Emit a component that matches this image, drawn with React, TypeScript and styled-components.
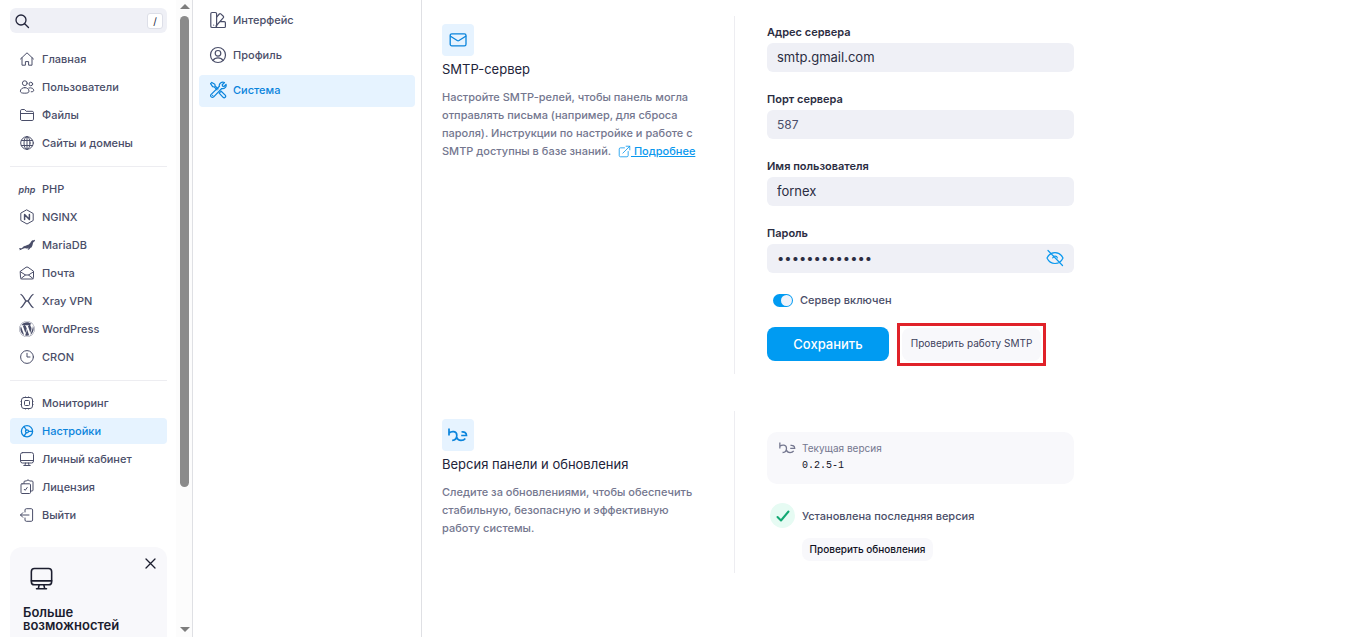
import React from 'react';
import styled, { createGlobalStyle, css } from 'styled-components';
import { FaWordpress } from 'react-icons/fa';
import { SiMariadb } from 'react-icons/si';

const GlobalStyle = createGlobalStyle`
  *, *::before, *::after { box-sizing: border-box; }
  body {
    margin: 0;
    background: #fff;
    color: #4a4e69;
    font-family: Inter, 'Liberation Sans', sans-serif;
    font-size: 11px;
    font-weight: 500;
  }
  button, input { font: inherit; color: inherit; }
  h2, p { margin: 0; }
`;

const Page = styled.div`
  display: flex;
  height: 100vh;
  overflow: hidden;
`;

const Sidebar = styled.aside`
  display: flex;
  flex: none;
  width: 193px;
  border-right: 1px solid #dfe0e4;
`;

const SidebarContent = styled.div`
  flex: 1;
  min-width: 0;
  overflow: hidden;
  padding: 8px 9px 0 10px;
`;

const ScrollTrack = styled.div`
  display: flex;
  flex: none;
  flex-direction: column;
  align-items: center;
  justify-content: space-between;
  width: 16px;
  padding: 4px 3px 5px 4px;
  background: #fcfcfc;
`;

const ScrollArrow = styled.span<{ $down?: boolean }>`
  border: 5px solid transparent;
  border-top-width: ${(p) => (p.$down ? '5px' : '0')};
  border-bottom-width: ${(p) => (p.$down ? '0' : '5px')};
  border-top-color: ${(p) => (p.$down ? '#7d7d7d' : 'transparent')};
  border-bottom-color: ${(p) => (p.$down ? 'transparent' : '#7d7d7d')};
`;

const ScrollRail = styled.div`
  flex: 1;
  width: 9px;
  margin: 7px 0;
`;

const ScrollThumb = styled.div`
  height: 78%;
  border-radius: 5px;
  background: #8b8b8b;
`;

const SearchBox = styled.label`
  display: flex;
  align-items: center;
  height: 25px;
  margin-bottom: 13px;
  padding: 0 4px;
  border-radius: 6px;
  background: #eff0f6;
  color: #22243a;
`;

const SearchInput = styled.input`
  flex: 1;
  min-width: 0;
  border: 0;
  outline: 0;
  background: none;
`;

const Key = styled.kbd`
  width: 16px;
  height: 16px;
  border: 1px solid #dddfe8;
  border-radius: 3px;
  background: #fff;
  font-family: inherit;
  font-size: 10px;
  font-weight: 400;
  line-height: 14px;
  text-align: center;
`;

const NavGroup = styled.nav`
  display: flex;
  flex-direction: column;
  gap: 2px;
  & + & {
    margin-top: 10px;
    padding-top: 9px;
    border-top: 1px solid #ededf1;
  }
`;

const activeLink = css`
  background: #e6f3ff;
  color: #0a84dc;
`;

const NavLink = styled.a<{ $active?: boolean }>`
  display: flex;
  align-items: center;
  gap: 6px;
  height: 26px;
  padding: 0 8px;
  border-radius: 4px;
  color: #4a4e69;
  text-decoration: none;
  white-space: nowrap;
  svg { margin: 0 1px; }
  ${(p) => p.$active && activeLink}
`;

const PhpMark = styled.span`
  width: 18px;
  font-size: 9px;
  font-style: italic;
  font-weight: 600;
  text-align: center;
`;

const Promo = styled.section`
  display: flex;
  flex-direction: column;
  height: 140px;
  margin-top: 19px;
  padding: 9px 9px 0 13px;
  border-radius: 12px;
  background: #f8f8fb;
  color: #1b1d2e;
`;

const CloseButton = styled.button`
  display: flex;
  align-self: flex-end;
  padding: 2px;
  border: 0;
  background: none;
`;

const PromoIcon = styled.div`
  margin-top: -5px;
  padding: 0 6px;
  line-height: 0;
`;

const PromoTitle = styled.h2`
  margin-top: 15px;
  font-size: 13px;
  font-weight: 600;
  line-height: 13px;
`;

const Subnav = styled.nav`
  display: flex;
  flex: none;
  flex-direction: column;
  gap: 3px;
  width: 229px;
  padding: 5px 6px;
  border-right: 1px solid #dfe0e4;
`;

const SubnavLink = styled(NavLink)`
  height: 32px;
  padding: 0 9px 2px;
  gap: 5px;
`;

const Main = styled.main`
  display: flex;
  flex: 1;
  flex-direction: column;
  gap: 37px;
  min-width: 0;
  overflow: hidden;
  padding: 16px 20px;
`;

const Section = styled.section<{ $minHeight: number }>`
  display: grid;
  flex: none;
  grid-template-columns: 293px minmax(0, 307px);
  column-gap: 32px;
  min-height: ${(p) => p.$minHeight}px;
`;

const Intro = styled.div`
  padding: 8px 34px 0 0;
  border-right: 1px solid #ededf1;
`;

const IconTile = styled.div`
  display: flex;
  align-items: center;
  justify-content: center;
  width: 32px;
  height: 32px;
  border-radius: 4px;
  background: #e6f3ff;
  color: #0a84dc;
`;

const Title = styled.h2`
  margin: 4px 0 10px;
  color: #22243a;
  font-size: 13px;
  font-weight: 400;
  line-height: 18px;
`;

const Description = styled.p`
  color: #74778f;
  line-height: 18px;
`;

const DocLink = styled.a`
  margin-left: 4px;
  color: #0a98ee;
  white-space: nowrap;
  svg { vertical-align: -3px; }
`;

const Form = styled.form`
  display: flex;
  flex-direction: column;
  padding-top: 9px;
`;

const Field = styled.div`
  display: flex;
  flex-direction: column;
  gap: 4px;
  margin-bottom: 20px;
`;

const FieldLabel = styled.label`
  color: #2b2d42;
  font-weight: 600;
  line-height: 14px;
`;

const InputBox = styled.div`
  display: flex;
  align-items: center;
  height: 29px;
  padding: 0 10px 1px;
  border-radius: 6px;
  background: #eff0f6;
`;

const TextInput = styled.input<{ $small?: boolean }>`
  flex: 1;
  min-width: 0;
  padding: 0;
  border: 0;
  outline: 0;
  background: none;
  color: ${(p) => (p.$small ? '#4a4e69' : '#2b2d42')};
  font-size: ${(p) => (p.$small ? '12px' : '13px')};
  font-weight: 400;
`;

const IconButton = styled.button`
  display: flex;
  padding: 0;
  border: 0;
  background: none;
  color: #0a98ee;
`;

const ToggleLabel = styled.label`
  display: flex;
  align-items: center;
  gap: 7px;
  height: 14px;
  margin: 0 0 20px 6px;
`;

const Toggle = styled.input`
  appearance: none;
  display: flex;
  justify-content: flex-end;
  width: 20px;
  height: 13px;
  margin: 0;
  padding: 1px;
  border-radius: 7px;
  background: #009bf2;
  &::before {
    content: '';
    width: 11px;
    height: 11px;
    border-radius: 50%;
    background: #eef3fb;
  }
`;

const Actions = styled.div`
  display: flex;
  align-items: center;
  gap: 8px;
  height: 34px;
`;

const SaveButton = styled.button`
  width: 122px;
  height: 34px;
  border: 0;
  border-radius: 8px;
  background: #009bf2;
  color: #fff;
  font-size: 13px;
`;

const Highlight = styled.div`
  flex: none;
  padding: 2px;
  border: 3px solid #e02229;
`;

const SoftButton = styled.button<{ $strong?: boolean }>`
  width: ${(p) => (p.$strong ? 131 : 139)}px;
  height: ${(p) => (p.$strong ? 23 : 33)}px;
  padding: 0 0 2px;
  border: 0;
  border-radius: 8px;
  background: #f8f8fb;
  color: ${(p) => (p.$strong ? '#10121f' : '#3d415c')};
  font-size: 10px;
  font-weight: ${(p) => (p.$strong ? 500 : 400)};
  white-space: nowrap;
`;

const Updates = styled.div`
  display: flex;
  flex-direction: column;
  padding-top: 21px;
`;

const VersionCard = styled.div`
  display: flex;
  gap: 6px;
  height: 52px;
  padding: 9px 12px;
  border-radius: 10px;
  background: #f8f8fb;
  color: #74778f;
  font-size: 10px;
  font-weight: 400;
  line-height: 14px;
`;

const Version = styled.div`
  color: #12131f;
  font-family: 'Liberation Mono', monospace;
  line-height: 22px;
`;

const Status = styled.div`
  display: flex;
  align-items: center;
  gap: 7px;
  margin: 19px 0 10px 3px;
`;

const CheckCircle = styled.span`
  display: flex;
  align-items: center;
  justify-content: center;
  width: 25px;
  height: 25px;
  border-radius: 50%;
  background: #e6fbf3;
  color: #12a873;
`;

const UpdateAction = styled.div`
  padding-left: 35px;
`;

const StrokeSvg = styled.svg`
  flex: none;
  fill: none;
  stroke: currentColor;
  stroke-linecap: round;
  stroke-linejoin: round;
`;

type IconProps = { size?: number; weight?: number; box?: number; children?: React.ReactNode };

const Icon = ({ size = 16, weight = 1, box = 16, children }: IconProps) => (
  <StrokeSvg width={size} height={size} viewBox={`0 0 ${box} ${box}`} strokeWidth={weight} aria-hidden="true">
    {children}
  </StrokeSvg>
);

const HomeIcon = () => (
  <Icon>
    <path d="M1.5 8 8 1.8 14.5 8M3 6.8v7.4h3.4v-3.6h3.2v3.6H13V6.8" />
  </Icon>
);
const UsersIcon = () => (
  <Icon>
    <circle cx="5.8" cy="4.2" r="2.4" />
    <circle cx="11.8" cy="5" r="1.8" />
    <path d="M5.8 8.6c-2.6 0-4.4 1.6-4.4 3.6 0 1.4 1.2 2 4.4 2s4.2-.6 4.2-2c0-2-1.7-3.6-4.2-3.6ZM9.8 9c2.8-.8 4.9.6 4.9 2.4 0 1-.7 1.4-2.5 1.4" />
  </Icon>
);
const FolderIcon = () => (
  <Icon>
    <path d="M1.5 12.2V3.8c0-.8.5-1.3 1.3-1.3h2.7l1.7 1.8h6c.8 0 1.3.5 1.3 1.3v6.6c0 .8-.5 1.3-1.3 1.3H2.8c-.8 0-1.3-.5-1.3-1.3ZM1.5 6.5h13" />
  </Icon>
);
const GlobeIcon = () => (
  <Icon>
    <circle cx="8" cy="8" r="6.3" />
    <ellipse cx="8" cy="8" rx="3" ry="6.3" />
    <path d="M2.5 5.5h11M2.5 10.5h11M8 1.7v12.6" />
  </Icon>
);
const NginxIcon = () => (
  <Icon>
    <path d="m8 1 6.2 3.5v7L8 15l-6.2-3.5v-7Z" />
    <path d="M5.6 10.5v-5l4.800 5v-5" strokeWidth="1.5" />
  </Icon>
);
const MailOpenIcon = () => (
  <Icon>
    <path d="M1.5 6.2 7 2.3c.6-.4 1.4-.4 2 0l5.500 3.900v6.500c0 .8-.5 1.300-1.300 1.300H2.800c-.8 0-1.300-.5-1.300-1.300ZM1.500 6.800l5 3.200h3l5-3.200M2 13.500 6.500 10M14 13.500 9.500 10" />
  </Icon>
);
const XrayIcon = () => (
  <Icon weight={1.3}>
    <path d="M2 1.5c2 1 3 4 5 6.5-2 2.5-3 5.5-5 6.500M14 1.500c-2 1-3 4-5 6.500 2 2.500 3 5.500 5 6.500M7 8h2" />
  </Icon>
);
const ClockIcon = () => (
  <Icon>
    <circle cx="8" cy="8" r="6.4" />
    <path d="M8 4.3V8h3" />
  </Icon>
);
const ChipIcon = () => (
  <Icon>
    <rect x="2.5" y="2.5" width="11" height="11" rx="2.5" />
    <rect x="5.5" y="5.5" width="5" height="5" rx="1" />
    <path strokeWidth="0.5" d="M6.500 1.500v1M9.500 1.500v1M6.500 13.500v1M9.500 13.500v1M1.500 6.500h1M1.500 9.500h1M13.500 6.500h1M13.500 9.500h1" />
  </Icon>
);
const SettingsIcon = () => (
  <Icon weight={1.3}>
    <circle cx="8" cy="8.3" r="5.6" />
    <circle cx="8" cy="8.3" r="1.5" />
    <path d="M9.5 8.3h4M7.3 7 5 3.5M7.3 9.600 5 13.100" />
  </Icon>
);
const MonitorIcon = ({ size = 16 }: { size?: number }) => (
  <Icon size={size}>
    <rect x="1.5" y="1.6" width="13" height="10.4" rx="2" />
    <path d="M1.500 9.500h13M6.500 12 6 14.300M9.500 12l.5 2.300M4.800 14.500h6.400" />
  </Icon>
);
const LicenseIcon = () => (
  <Icon>
    <path d="M5 4.500V3c0-.6.4-1 1-1h1.500c0-1.300 3-1.300 3 0H13c.6 0 1 .4 1 1v8c0 .6-.4 1-1 1h-1.500M3 4.800h7.500c.6 0 1 .4 1 1v7.700c0 .6-.4 1-1 1H3c-.6 0-1-.4-1-1V5.800c0-.6.4-1 1-1ZM5.200 10.300l1 1 2-2.800" />
  </Icon>
);
const LogoutIcon = () => (
  <Icon>
    <path d="M6 5V3c0-.8.5-1.300 1.300-1.300h5c.8 0 1.300.5 1.300 1.300v10c0 .8-.5 1.300-1.300 1.300h-5C6.500 14.300 6 13.800 6 13v-2M10 8H1.500M3.800 5.700 1.500 8l2.300 2.300" />
  </Icon>
);
const SwatchIcon = () => (
  <Icon size={18} box={18} weight={1.2}>
    <rect x="1.8" y="1.5" width="5.8" height="15" rx="1.3" />
    <path d="M7.600 6.200 10.300 3c.5-.5 1-.5 1.500-.1l2.500 2.300c.5.500.5 1 .1 1.500L7 15M11.800 10.600h3.500c.7 0 1.100.4 1.100 1.100v3.700c0 .7-.4 1.100-1.100 1.100H4.700M4.700 14v.1" />
  </Icon>
);
const ProfileIcon = () => (
  <Icon size={18} box={18} weight={1.2}>
    <circle cx="9" cy="9" r="7.5" />
    <circle cx="9" cy="7.3" r="2.8" />
    <path d="M4 14.500c1.300-2 3-2.600 5-2.600s3.700.6 5 2.600" />
  </Icon>
);
const ToolsIcon = () => (
  <Icon size={18} box={18} weight={1.2}>
    <path d="M1.600 2.600 2.800 1.400l3 1.800.3 1.700 3 3M1.600 2.600l2 3 1.600.3 2.800 2.900M10.200 12.200l2-2 4 3.900c1.400 1.600-.7 3.500-2.100 2.200Z" />
    <path d="m15.500 1.500-2.300 2.200.3 1.500 1.500.3 2-2.200c.8 2.600-1.600 5-4.300 4.200l-8 8.300c-1.700 1.600-4.100-.7-2.500-2.400l8.200-8.100c-.8-2.700 2.200-5 5.100-3.800ZM3.700 14.300v.1" />
  </Icon>
);
const EnvelopeIcon = () => (
  <Icon size={18} box={18} weight={1.3}>
    <rect x="1.2" y="2.8" width="15.8" height="12" rx="1.6" />
    <path d="m1.500 5.200 6.700 4.300c.6.400 1.200.4 1.800 0l6.700-4.300" />
  </Icon>
);
const ExternalIcon = () => (
  <Icon size={13}>
    <path d="M8 3.500H3c-.9 0-1.500.6-1.500 1.500v8c0 .9.6 1.500 1.500 1.500h8c.9 0 1.500-.6 1.500-1.500V8M10 1.500h4.500V6M14.500 1.500 6 10" />
  </Icon>
);
const EyeOffIcon = () => (
  <Icon size={18} box={18} weight={1.2}>
    <path d="M1 9c1.700-3.500 4.500-5.300 8-5.300S15.300 5.500 17 9c-1.700 3.700-4.500 5.500-8 5.500S2.700 12.700 1 9ZM2 1.500l14.500 15M6.700 9A2.400 2.400 0 0 1 11.400 9" />
  </Icon>
);
const LogoSvg = styled.svg`
  flex: none;
  fill: none;
  stroke: currentColor;
`;
const PanelLogo = ({ width, weight }: { width: number; weight: number }) => (
  <LogoSvg width={width} height={14} viewBox="0 0 20 14" strokeWidth={weight} aria-hidden="true">
    <path d="M1 .5V7.500M1 5C3.500 3 8.800 2.700 8.800 7.300c0 3-1.800 5-4.600 5M8.500 9c.8 2.300 2.500 3.400 4.500 3.400 1.900 0 3.300-.6 4.300-2M13.500 4c2.800-.6 5 .8 5 3.500h-5.300" />
  </LogoSvg>
);

const navGroups = [
  [
    { label: 'Главная', icon: <HomeIcon /> },
    { label: 'Пользователи', icon: <UsersIcon /> },
    { label: 'Файлы', icon: <FolderIcon /> },
    { label: 'Сайты и домены', icon: <GlobeIcon /> },
  ],
  [
    { label: 'PHP', icon: <PhpMark>php</PhpMark> },
    { label: 'NGINX', icon: <NginxIcon /> },
    { label: 'MariaDB', icon: <SiMariadb size={16} /> },
    { label: 'Почта', icon: <MailOpenIcon /> },
    { label: 'Xray VPN', icon: <XrayIcon /> },
    { label: 'WordPress', icon: <FaWordpress size={16} /> },
    { label: 'CRON', icon: <ClockIcon /> },
  ],
  [
    { label: 'Мониторинг', icon: <ChipIcon /> },
    { label: 'Настройки', icon: <SettingsIcon />, active: true },
    { label: 'Личный кабинет', icon: <MonitorIcon /> },
    { label: 'Лицензия', icon: <LicenseIcon /> },
    { label: 'Выйти', icon: <LogoutIcon /> },
  ],
];

export default function App() {
  return (
    <>
      <GlobalStyle />
      <Page>
        <Sidebar>
          <SidebarContent>
            <SearchBox>
              <Icon weight={1.3}>
                <circle cx="7" cy="7" r="5" />
                <path d="m10.700 10.700 3.800 3.800" />
              </Icon>
              <SearchInput type="text" aria-label="Поиск" />
              <Key>/</Key>
            </SearchBox>
            {navGroups.map((group, index) => (
              <NavGroup key={index}>
                {group.map((item) => (
                  <NavLink key={item.label} href="#" $active={'active' in item}>
                    {item.icon}
                    {item.label}
                  </NavLink>
                ))}
              </NavGroup>
            ))}
            <Promo>
              <CloseButton aria-label="Закрыть">
                <Icon size={11} box={11} weight={1.3}>
                  <path d="m1 1 9 9M10 1l-9 9" />
                </Icon>
              </CloseButton>
              <PromoIcon>
                <MonitorIcon size={25} />
              </PromoIcon>
              <PromoTitle>Больше возможностей</PromoTitle>
            </Promo>
          </SidebarContent>
          <ScrollTrack aria-hidden="true">
            <ScrollArrow />
            <ScrollRail>
              <ScrollThumb />
            </ScrollRail>
            <ScrollArrow $down />
          </ScrollTrack>
        </Sidebar>

        <Subnav>
          <SubnavLink href="#"><SwatchIcon />Интерфейс</SubnavLink>
          <SubnavLink href="#"><ProfileIcon />Профиль</SubnavLink>
          <SubnavLink href="#" $active><ToolsIcon />Система</SubnavLink>
        </Subnav>

        <Main>
          <Section $minHeight={358}>
            <Intro>
              <IconTile><EnvelopeIcon /></IconTile>
              <Title>SMTP-сервер</Title>
              <Description>
                Настройте SMTP-релей, чтобы панель могла отправлять письма (например, для сброса
                пароля). Инструкции по настройке и работе с SMTP доступны в базе знаний.{' '}
                <DocLink href="#"><ExternalIcon /> Подробнее</DocLink>
              </Description>
            </Intro>
            <Form onSubmit={(event) => event.preventDefault()}>
              <Field>
                <FieldLabel htmlFor="host">Адрес сервера</FieldLabel>
                <InputBox><TextInput id="host" type="text" defaultValue="smtp.gmail.com" /></InputBox>
              </Field>
              <Field>
                <FieldLabel htmlFor="port">Порт сервера</FieldLabel>
                <InputBox><TextInput id="port" type="text" defaultValue="587" $small /></InputBox>
              </Field>
              <Field>
                <FieldLabel htmlFor="user">Имя пользователя</FieldLabel>
                <InputBox><TextInput id="user" type="text" defaultValue="fornex" /></InputBox>
              </Field>
              <Field>
                <FieldLabel htmlFor="password">Пароль</FieldLabel>
                <InputBox>
                  <TextInput id="password" type="password" defaultValue="smtp-password" />
                  <IconButton type="button" aria-label="Показать пароль"><EyeOffIcon /></IconButton>
                </InputBox>
              </Field>
              <ToggleLabel>
                <Toggle type="checkbox" defaultChecked />
                Сервер включен
              </ToggleLabel>
              <Actions>
                <SaveButton type="submit">Сохранить</SaveButton>
                <Highlight>
                  <SoftButton type="button">Проверить работу SMTP</SoftButton>
                </Highlight>
              </Actions>
            </Form>
          </Section>

          <Section $minHeight={162}>
            <Intro>
              <IconTile><PanelLogo width={20} weight={1.7} /></IconTile>
              <Title>Версия панели и обновления</Title>
              <Description>
                Следите за обновлениями, чтобы обеспечить стабильную, безопасную и эффективную
                работу системы.
              </Description>
            </Intro>
            <Updates>
              <VersionCard>
                <PanelLogo width={17} weight={1.5} />
                <div>
                  Текущая версия
                  <Version>0.2.5-1</Version>
                </div>
              </VersionCard>
              <Status>
                <CheckCircle>
                  <Icon weight={2}>
                    <path d="m2.500 9 3.500 3.500 7.500-9" />
                  </Icon>
                </CheckCircle>
                Установлена последняя версия
              </Status>
              <UpdateAction>
                <SoftButton type="button" $strong>Проверить обновления</SoftButton>
              </UpdateAction>
            </Updates>
          </Section>
        </Main>
      </Page>
    </>
  );
}
